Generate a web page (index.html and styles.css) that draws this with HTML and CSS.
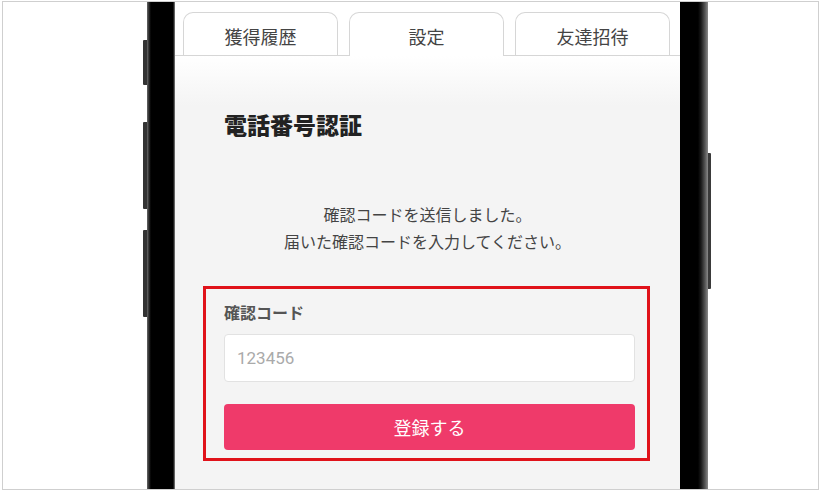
FILE: index.html
```html
<!DOCTYPE html>
<html lang="ja">
<head>
<meta charset="utf-8">
<title>電話番号認証</title>
<link rel="stylesheet" href="styles.css">
</head>
<body>
<div class="frame">
  <div class="phone">
    <div class="side-left">
      <span class="btn btn-a"></span>
      <span class="btn btn-b"></span>
      <span class="btn btn-c"></span>
    </div>
    <div class="bezel bezel-left"></div>
    <div class="screen">
      <div class="tabs">
        <div class="tab">獲得履歴</div>
        <div class="tab active">設定</div>
        <div class="tab">友達招待</div>
      </div>
      <div class="content">
        <h1 class="title">電話番号認証</h1>
        <p class="message">確認コードを送信しました。<br>届いた確認コードを入力してください。</p>
        <div class="highlight">
          <label class="label" for="code">確認コード</label>
          <input class="input" id="code" type="text" placeholder="123456">
          <button class="submit" type="button">登録する</button>
        </div>
      </div>
    </div>
    <div class="bezel bezel-right"></div>
    <div class="side-right">
      <span class="btn btn-r"></span>
    </div>
  </div>
</div>
</body>
</html>
```
FILE: styles.css
```css
* { box-sizing: border-box; }
html, body { margin: 0; padding: 0; background: #fff; }
body {
  font-family: "Noto Sans CJK JP", "Noto Sans", sans-serif;
  padding: 1px 2px 0 2px;
}
.frame {
  width: 817px;
  height: 489px;
  border: 1px solid #cfcfcf;
  overflow: hidden;
  background: #fff;
}
.phone {
  display: flex;
  height: 100%;
  padding-left: 140px;
}
.side-left {
  width: 4px;
  display: flex;
  flex-direction: column;
}
.btn {
  display: block;
  width: 4px;
  background: #333;
  border-radius: 1px 0 0 1px;
}
.btn-a { margin-top: 38px; height: 45px; }
.btn-b { margin-top: 37px; height: 87px; }
.btn-c { margin-top: 21px; height: 87px; }
.bezel {
  width: 28px;
  height: 100%;
}
.bezel-left {
  background: linear-gradient(to right, #6a6a6a 0, #2a2a2a 2px, #000 4px, #000 26px, #3a3a3a 27px, #8a8a8a 28px);
}
.bezel-right {
  background: linear-gradient(to right, #000 0, #000 18px, #1a1a1a 21px, #555 25px, #8a8a8a 28px);
}
.side-right {
  width: 3px;
  display: flex;
  flex-direction: column;
}
.btn-r { width: 3px; margin-top: 151px; height: 136px; background: #3a3a3a; border-radius: 0 1px 1px 0; }
.screen {
  width: 505px;
  height: 100%;
  background: #f4f4f4;
  display: flex;
  flex-direction: column;
}
.tabs {
  background: #fff;
  display: flex;
  gap: 11px;
  padding: 10px 10px 0 8px;
  border-bottom: 1px solid #d6d6d6;
}
.tab {
  width: 155px;
  height: 43px;
  border: 1px solid #d6d6d6;
  border-bottom: none;
  border-radius: 10px 10px 0 0;
  background: #fff;
  color: #444;
  font-size: 18px;
  line-height: 24px;
  text-align: center;
  padding-top: 11px;
}
.tab.active {
  height: 44px;
  margin-bottom: -1px;
}
.content {
  flex: 1;
  background: linear-gradient(to bottom, #fff 0, #f4f4f4 50px, #f4f4f4 100%);
  padding-top: 52px;
}
.title {
  margin: 0 0 0 49px;
  font-size: 23px;
  line-height: 32px;
  font-weight: 800;
  color: #222;
}
.message {
  margin: 61px 0 0 0;
  text-align: center;
  font-size: 16px;
  line-height: 27px;
  color: #444;
}
.highlight {
  margin: 31px 30px 0 28px;
  border: 3px solid #e0121a;
  padding: 11px 12px 8px 18px;
  display: flex;
  flex-direction: column;
}
.label {
  font-size: 16px;
  line-height: 24px;
  font-weight: 700;
  color: #555;
}
.input {
  margin-top: 10px;
  height: 48px;
  border: 1px solid #e2e2e2;
  border-radius: 4px;
  background: #fff;
  padding: 0 12px;
  font-family: Roboto, "Noto Sans", sans-serif;
  font-size: 17px;
  color: #333;
  outline: none;
}
.input::placeholder { color: #aaa; }
.submit {
  margin-top: 22px;
  height: 46px;
  border: none;
  border-radius: 4px;
  background: #ef3a6a;
  color: #fff;
  font-family: "Noto Sans CJK JP", "Noto Sans", sans-serif;
  font-size: 18px;
  line-height: 24px;
}
```
